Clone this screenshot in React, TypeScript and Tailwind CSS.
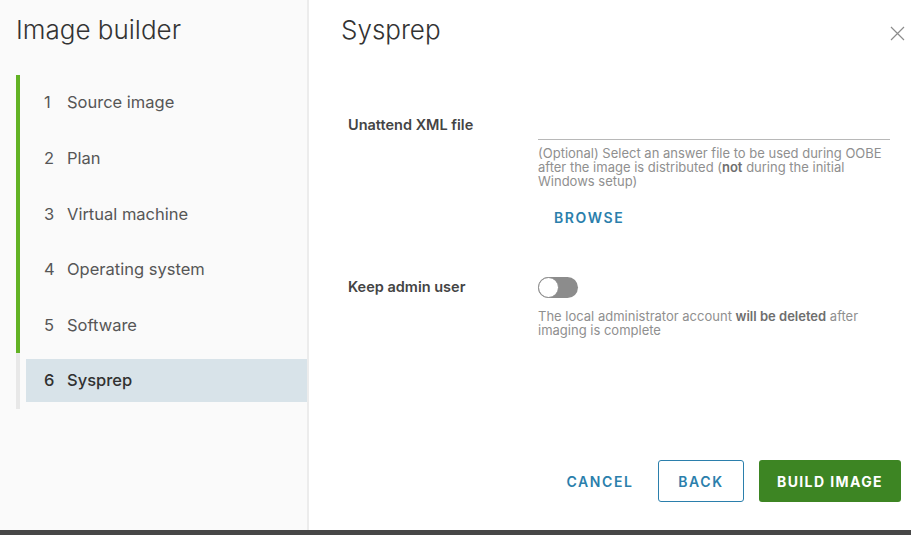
const steps = [
  'Source image',
  'Plan',
  'Virtual machine',
  'Operating system',
  'Software',
  'Sysprep',
];

const ACTIVE = 5;

function CloseIcon() {
  return (
    <svg width="15" height="15" viewBox="0 0 15 15" className="text-[#8c8c8c]">
      <path d="M1 1 L14 14 M14 1 L1 14" stroke="currentColor" strokeWidth="1.2" fill="none" />
    </svg>
  );
}

export default function App() {
  return (
    <div
      className="flex h-[535px] w-[911px] flex-col overflow-hidden bg-white text-[#333]"
      style={{ fontFamily: 'Inter, "Open Sans", sans-serif' }}
    >
      <div className="flex h-[530px]">
        {/* Wizard step nav */}
        <aside className="w-[309px] shrink-0 border-r-2 border-[#ececec] bg-[#fafafa]">
          <h1 className="pl-[16px] pt-[14px] text-[26px] font-light leading-[32px] text-[#333]">
            Image builder
          </h1>
          <ol className="mt-[29px] pl-[16px]">
            {steps.map((s, i) => {
              const done = i < ACTIVE;
              const active = i === ACTIVE;
              return (
                <li
                  key={s}
                  className={`flex h-[55.6px] items-center border-l-4 ${
                    done ? 'border-[#62b224]' : 'border-[#e8e8e8]'
                  }`}
                >
                  <div
                    className={`ml-[6px] flex h-[43px] flex-1 items-center pl-[18px] text-[16.5px] ${
                      active ? 'bg-[#d8e3e9] font-medium text-[#313131]' : 'text-[#565656]'
                    }`}
                  >
                    <span className="w-[23px]">{i + 1}</span>
                    <span>{s}</span>
                  </div>
                </li>
              );
            })}
          </ol>
        </aside>

        {/* Step content */}
        <main className="flex flex-1 flex-col">
          <div className="flex items-start justify-between pl-[32px] pr-[6px] pt-[14px]">
            <h2 className="text-[26px] font-light leading-[32px] text-[#333]">Sysprep</h2>
            <button type="button" className="mt-[12px]">
              <CloseIcon />
            </button>
          </div>

          <div className="mt-[70px] pl-[39px]">
            <div className="flex">
              <div className="w-[190px] text-[14.5px] font-semibold leading-[18px] text-[#444]">
                Unattend XML file
              </div>
              <div className="w-[352px]">
                <div className="h-[24px] border-b border-[#b8b8b8]" />
                <p className="mt-[6px] text-[13px] leading-[14px] text-[#8f8f8f]">
                  (Optional) Select an answer file to be used during OOBE after the image is
                  distributed (<span className="font-semibold text-[#6e6e6e]">not</span> during the
                  initial Windows setup)
                </p>
                <button
                  type="button"
                  className="mt-[11px] h-[36px] px-[16px] text-[14px] font-semibold tracking-[1.6px] text-[#2b7fac]"
                >
                  BROWSE
                </button>
              </div>
            </div>

            <div className="mt-[42px] flex">
              <div className="w-[190px] pt-[1px] text-[14.5px] font-semibold leading-[18px] text-[#444]">
                Keep admin user
              </div>
              <div className="w-[352px]">
                <div className="relative h-[21px] w-[40px] rounded-full bg-[#8c8c8c]">
                  <div className="absolute left-0 top-0 h-[21px] w-[21px] rounded-full border border-[#8c8c8c] bg-white" />
                </div>
                <p className="mt-[11px] text-[13px] leading-[14px] text-[#8f8f8f]">
                  The local administrator account{' '}
                  <span className="font-semibold text-[#6e6e6e]">will be deleted</span> after imaging
                  is complete
                </p>
              </div>
            </div>
          </div>

          <div className="mt-auto flex items-center justify-end gap-[12px] pb-[28px] pr-[10px]">
            <button
              type="button"
              className="h-[42px] w-[92px] text-[14px] font-semibold tracking-[1.6px] text-[#2b7fac]"
            >
              CANCEL
            </button>
            <button
              type="button"
              className="h-[42px] w-[86px] rounded-[3px] border border-[#2b7fac] bg-white text-[14px] font-semibold tracking-[1.6px] text-[#2b7fac]"
            >
              BACK
            </button>
            <button
              type="button"
              className="ml-[3px] h-[42px] w-[142px] rounded-[3px] bg-[#3d8523] text-[14px] font-bold tracking-[1.4px] text-white"
            >
              BUILD IMAGE
            </button>
          </div>
        </main>
      </div>
      <div className="h-[5px] bg-[#474747]" />
    </div>
  );
}
